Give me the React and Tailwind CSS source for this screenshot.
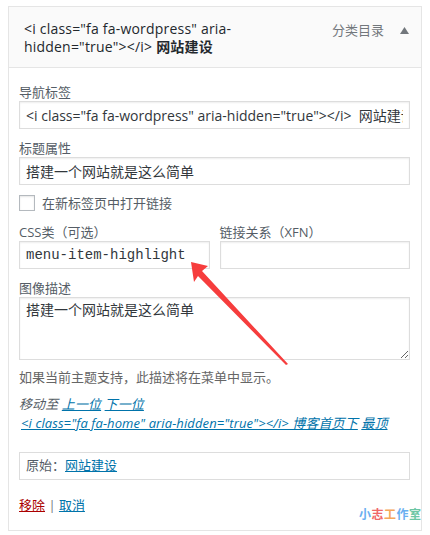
import React from 'react';

const FONT = { fontFamily: '"Open Sans", "Noto Sans CJK SC", sans-serif' };

function Label({ children }) {
  return <div className="text-[13px] leading-[18px] text-[#555d66]">{children}</div>;
}

function Field({ label, children, className = '' }) {
  return (
    <div className={className}>
      <Label>{label}</Label>
      {children}
    </div>
  );
}

const inputCls =
  'block w-full h-[28px] border border-[#ddd] bg-white px-[6px] text-[14px] text-[#32373c] outline-none shadow-[inset_0_1px_2px_rgba(0,0,0,0.07)]';

export default function App() {
  return (
    <div className="relative w-[430px] h-[535px] bg-white pt-[6px] pl-[8px]" style={FONT}>
      <div className="w-[414px] border border-[#e5e5e5]">
        {/* Header */}
        <div className="h-[61px] bg-[#fafafa] border-b border-[#e5e5e5] flex pl-[15px] pr-[12px] pt-[13px]">
          <div className="flex-1 text-[14px] leading-[18px] text-[#23282d] tracking-[0.2px]">
            <div>&lt;i class="fa fa-wordpress" aria-</div>
            <div>
              hidden="true"&gt;&lt;/i&gt; <span className="font-semibold">网站建设</span>
            </div>
          </div>
          <div className="flex items-start gap-[16px] pt-[1px]">
            <span className="text-[13px] leading-[18px] text-[#72777c]">分类目录</span>
            <svg width="9" height="7" viewBox="0 0 9 7" className="mt-[6px]">
              <polygon points="4.5,0 9,7 0,7" fill="#72777c" />
            </svg>
          </div>
        </div>

        {/* Body */}
        <div className="pl-[10px] pr-[11px] pt-[15px] pb-[16px]">
          <Field label="导航标签">
            <input
              className={inputCls}
              defaultValue={'<i class="fa fa-wordpress" aria-hidden="true"></i>  网站建设'}
            />
          </Field>

          <Field label="标题属性" className="mt-[10px]">
            <input className={inputCls} defaultValue="搭建一个网站就是这么简单" />
          </Field>

          <label className="mt-[9px] flex items-center gap-[7px]">
            <span className="w-[16px] h-[16px] border border-[#b4b9be] bg-white shadow-[inset_0_1px_2px_rgba(0,0,0,0.1)]" />
            <span className="text-[13px] leading-[18px] text-[#555d66]">在新标签页中打开链接</span>
          </label>

          <div className="mt-[11px] flex gap-[10px]">
            <Field label="CSS类（可选）" className="flex-1">
              <input
                className={inputCls + ' text-[13px]'}
                style={{ fontFamily: '"Liberation Mono", monospace' }}
                defaultValue="menu-item-highlight"
              />
            </Field>
            <Field label="链接关系（XFN）" className="flex-1">
              <input className={inputCls} defaultValue="" />
            </Field>
          </div>

          <Field label="图像描述" className="mt-[10px]">
            <textarea
              className="block w-full h-[63px] border border-[#ddd] bg-white px-[6px] py-[2px] text-[14px] leading-[20px] text-[#32373c] outline-none resize-y shadow-[inset_0_1px_2px_rgba(0,0,0,0.07)]"
              defaultValue="搭建一个网站就是这么简单"
            />
          </Field>

          <p className="mt-[8px] text-[13px] leading-[19px] text-[#666]">
            如果当前主题支持，此描述将在菜单中显示。
          </p>

          <div className="mt-[8px] text-[13px] leading-[19px] italic tracking-[0.1px]">
            <div>
              <span className="text-[#555d66]">移动至</span>{' '}
              <a className="text-[#0073aa] underline">上一位</a>{' '}
              <a className="text-[#0073aa] underline">下一位</a>
            </div>
            <div className="pl-[2px]">
              <a className="text-[#0073aa] underline">
                &lt;i class="fa fa-home" aria-hidden="true"&gt;&lt;/i&gt; 博客首页下
              </a>{' '}
              <a className="text-[#0073aa] underline">最顶</a>
            </div>
          </div>

          <div className="mt-[19px] h-[28px] border border-[#ddd] flex items-center px-[6px] text-[13px]">
            <span className="text-[#555d66]">原始：</span>
            <a className="text-[#0073aa] underline">网站建设</a>
          </div>

          <div className="mt-[16px] text-[13px] leading-[18px]">
            <a className="text-[#a00] underline">移除</a>
            <span className="text-[#72777c]"> | </span>
            <a className="text-[#0073aa] underline">取消</a>
          </div>
        </div>
      </div>

      {/* annotation arrow */}
      <svg className="absolute left-0 top-0 pointer-events-none" width="430" height="535">
        <polygon
          points="191,262 208,266 202,271 288,364 286,365 198,276 194,282"
          fill="#f63d3d"
        />
      </svg>

      {/* watermark */}
      <div className="absolute left-[359px] top-[506px] whitespace-nowrap text-[12px] font-bold leading-[18px] tracking-[0.5px]">
        <span className="text-[#6aaff0]">小</span>
        <span className="text-[#ef6868]">志</span>
        <span className="text-[#f5a75a]">工</span>
        <span className="text-[#6aaff0]">作</span>
        <span className="text-[#6cc6a4]">室</span>
      </div>
    </div>
  );
}
